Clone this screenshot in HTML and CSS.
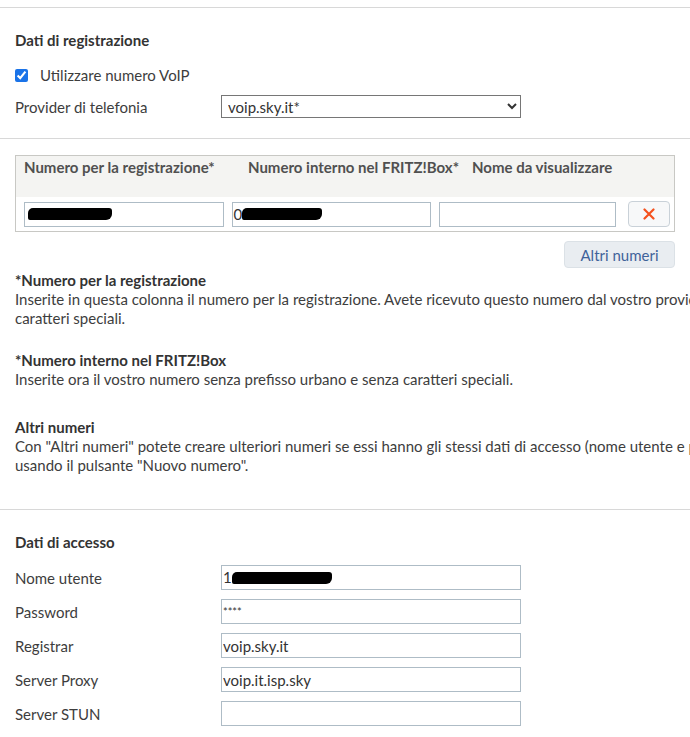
FILE: index.html
```html
<!DOCTYPE html>
<html lang="it">
<head>
    <meta charset="UTF-8">
    <meta name="viewport" content="width=device-width, initial-scale=1.0">
    <title>Telefonia - Numeri propri</title>
    <link rel="stylesheet" href="styles.css">
</head>
<body>
    <div class="page">
        <div class="section">
            <h3 class="section-title">Dati di registrazione</h3>
            <label class="check-row">
                <input type="checkbox" checked>
                <span>Utilizzare numero VoIP</span>
            </label>
            <div class="form-row">
                <span class="label">Provider di telefonia</span>
                <select class="provider-select">
                    <option>voip.sky.it*</option>
                </select>
            </div>
        </div>

        <div class="section numbers">
            <div class="number-table">
                <div class="table-head">
                    <span>Numero per la registrazione*</span>
                    <span>Numero interno nel FRITZ!Box*</span>
                    <span>Nome da visualizzare</span>
                </div>
                <div class="table-row">
                    <div class="field field-wide"><span class="redact redact-a"></span></div>
                    <div class="field field-wide">0<span class="redact redact-b"></span></div>
                    <input type="text" class="field field-name">
                    <button type="button" class="delete-button" title="Elimina">
                        <svg width="12" height="12" viewBox="0 0 12 12">
                            <path d="M1.5 1.5 L10.5 10.5 M10.5 1.5 L1.5 10.5" stroke="#f4511e" stroke-width="2.2" stroke-linecap="round"/>
                        </svg>
                    </button>
                </div>
            </div>
            <div class="actions">
                <button type="button" class="more-button">Altri numeri</button>
            </div>

            <div class="help">
                <p><strong>*Numero per la registrazione</strong><br>
                Inserite in questa colonna il numero per la registrazione. Avete ricevuto questo numero dal vostro provider. Inseritelo senza prefisso e senza<br>
                caratteri speciali.</p>
                <p class="help-second"><strong>*Numero interno nel FRITZ!Box</strong><br>
                Inserite ora il vostro numero senza prefisso urbano e senza caratteri speciali.</p>
                <p class="help-last"><strong>Altri numeri</strong><br>
                Con "Altri numeri" potete creare ulteriori numeri se essi hanno gli stessi dati di accesso (nome utente e password). Configurateli<br>
                usando il pulsante "Nuovo numero".</p>
            </div>
        </div>

        <div class="section">
            <h3 class="section-title access-title">Dati di accesso</h3>
            <div class="form-row">
                <span class="label">Nome utente</span>
                <div class="field field-text">1<span class="redact redact-c"></span></div>
            </div>
            <div class="form-row">
                <span class="label">Password</span>
                <input type="text" class="field field-text password" value="****">
            </div>
            <div class="form-row">
                <span class="label">Registrar</span>
                <input type="text" class="field field-text" value="voip.sky.it">
            </div>
            <div class="form-row">
                <span class="label">Server Proxy</span>
                <input type="text" class="field field-text" value="voip.it.isp.sky">
            </div>
            <div class="form-row">
                <span class="label">Server STUN</span>
                <input type="text" class="field field-text" value="">
            </div>
        </div>
    </div>
</body>
</html>
```

FILE: styles.css
```css
html {
    overflow: hidden;
}

body {
    margin: 0;
    padding-top: 7px;
    font-family: 'Lato', 'Liberation Sans', sans-serif;
    font-size: 15px;
    line-height: 20px;
    color: #3d3d3d;
    background: #ffffff;
}

.page {
    width: 780px;
}

.section {
    border-top: 1px solid #d8d8d8;
    padding: 22px 15px 20px 15px;
}

.section-title {
    margin: 0 0 15px 0;
    font-size: 15px;
    line-height: 20px;
    font-weight: bold;
    color: #333333;
}

.access-title {
    margin-bottom: 13px;
}

.check-row {
    display: flex;
    align-items: center;
    gap: 12px;
    height: 20px;
    margin-bottom: 10px;
}

.check-row input {
    margin: 0;
    width: 13px;
    height: 13px;
    accent-color: #1a73e8;
}

.form-row {
    display: flex;
    align-items: center;
    margin-bottom: 9px;
}

.form-row:last-child {
    margin-bottom: 0;
}

.label {
    width: 206px;
}

.provider-select {
    width: 300px;
    height: 23px;
    font-family: inherit;
    font-size: 15px;
    color: #333333;
    border: 1px solid #767676;
    border-radius: 0;
    background: #ffffff;
    padding: 0 2px;
}

/* tabella numeri */

.numbers {
    padding-top: 16px;
    padding-bottom: 34px;
}

.number-table {
    width: 658px;
    border: 1px solid #c8c8c4;
}

.table-head {
    display: flex;
    height: 40px;
    padding: 1px 8px 0 8px;
    background: #f4f4f2;
    font-weight: bold;
    color: #505050;
    white-space: nowrap;
}

.table-head span {
    width: 224px;
    flex-shrink: 0;
}

.table-row {
    display: flex;
    align-items: center;
    gap: 8px;
    padding: 4px 4px 4px 8px;
}

.field {
    box-sizing: border-box;
    height: 25px;
    border: 1px solid #aebcc6;
    background: #ffffff;
    font-family: inherit;
    font-size: 15px;
    color: #333333;
    padding: 0 1px;
    line-height: 23px;
    outline: none;
}

.field-wide {
    width: 200px;
    display: flex;
    align-items: center;
}

.field-name {
    width: 177px;
}

.field-text {
    width: 300px;
    display: flex;
    align-items: center;
}

.password {
    font-size: 11px;
}

.redact {
    display: inline-block;
    background: #000000;
    height: 12px;
    border-radius: 5px 3px 6px 2px;
}

.redact-a {
    width: 84px;
    margin-left: 2px;
}

.redact-b {
    width: 80px;
}

.redact-c {
    width: 100px;
}

.delete-button {
    width: 42px;
    height: 26px;
    margin-left: 4px;
    border: 1px solid #c9d1d8;
    border-radius: 4px;
    background: #f7f8f9;
    display: flex;
    align-items: center;
    justify-content: center;
    cursor: pointer;
}

.actions {
    width: 660px;
    display: flex;
    justify-content: flex-end;
    margin-top: 9px;
}

.more-button {
    width: 111px;
    height: 27px;
    border: 1px solid #dbe1e6;
    border-radius: 4px;
    background: #e9edf1;
    color: #3f629a;
    font-family: inherit;
    font-size: 15px;
    cursor: pointer;
}

.help {
    margin-top: 3px;
    white-space: nowrap;
    line-height: 19px;
}

.help p {
    margin: 0;
}

.help strong {
    color: #333333;
}

.help-second {
    margin-top: 23px !important;
}

.help-last {
    margin-top: 29px !important;
}
```
